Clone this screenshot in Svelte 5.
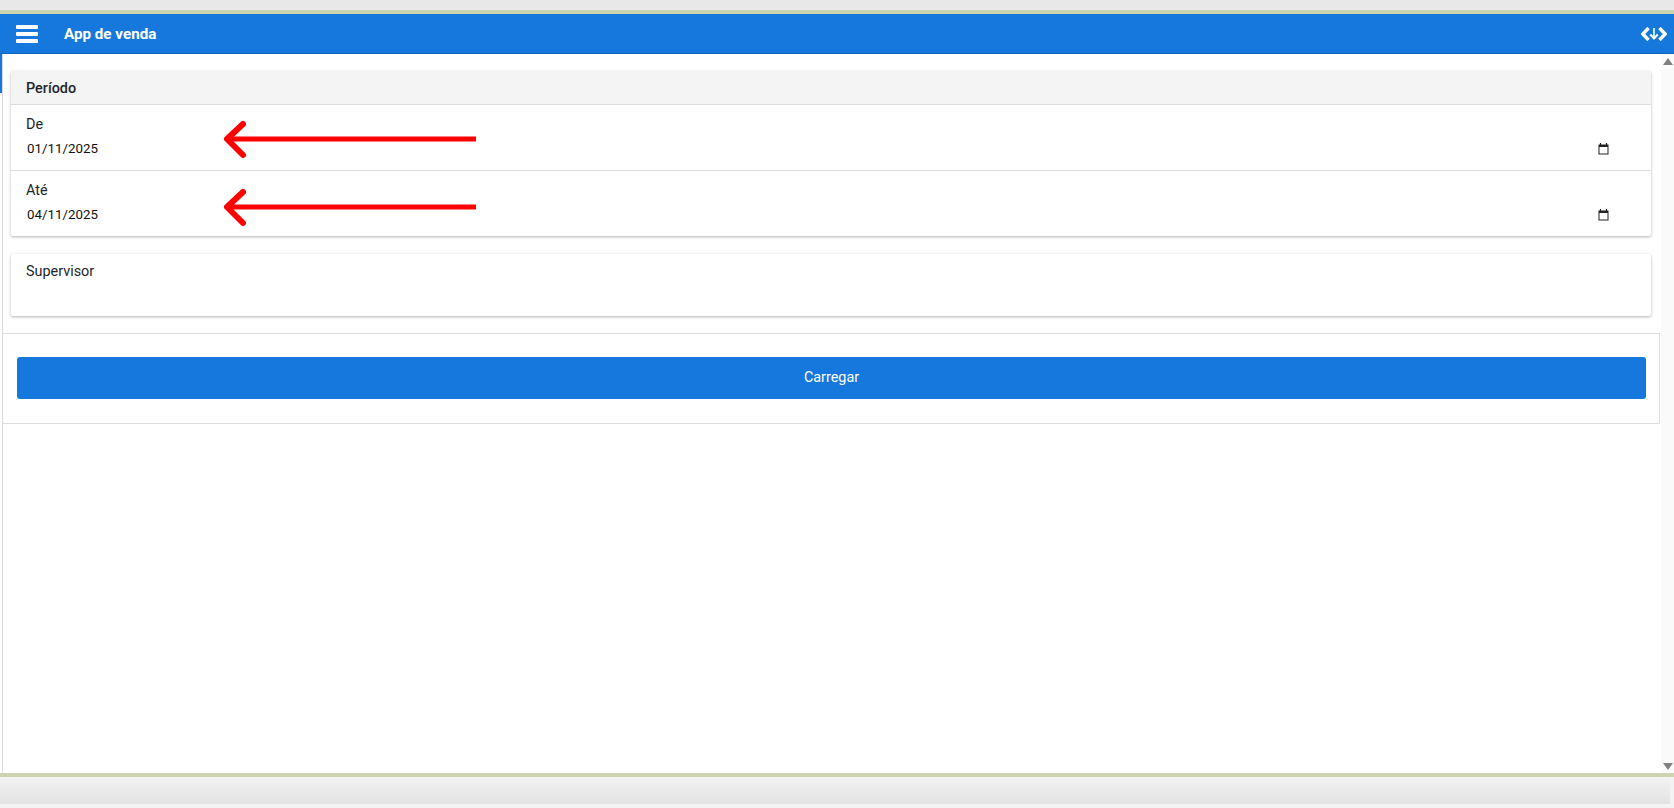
<script>
  const dates = [
    { label: "De", value: "01/11/2025" },
    { label: "Até", value: "04/11/2025" }
  ];
</script>

<style>
  :global(body) {
    font-family: Roboto, "Liberation Sans", sans-serif;
    font-size: 14.4px;
    color: #212529;
    background: #f3f3f3;
  }
  .page {
    height: 808px;
    display: flex;
    flex-direction: column;
    position: relative;
    overflow: hidden;
  }
  .topstrip {
    height: 10px;
    background: #e8e8e8;
  }
  .olive {
    height: 4px;
    background: #cdd5b0;
    flex: none;
  }
  .header {
    height: 39px;
    flex: none;
    display: flex;
    align-items: center;
    padding-left: 16px;
    background: #1678dd;
    border-bottom: 1px solid #1164b8;
    color: #fff;
    font-size: 15.2px;
    font-weight: 700;
  }
  .burger {
    width: 22px;
    height: 18px;
    display: flex;
    flex-direction: column;
    justify-content: space-between;
    margin-right: 26px;
  }
  .burger span {
    height: 4px;
    background: #fff;
    border-radius: 1px;
  }
  .logo {
    margin-left: auto;
    margin-right: 7px;
  }
  .body {
    flex: 1;
    display: flex;
    min-height: 0;
    background: #fff;
  }
  .rail {
    width: 2px;
    flex: none;
    background: #fff;
    border-right: 1px solid #dcdcdc;
  }
  .rail div {
    height: 39px;
    background: #1678dd;
  }
  .content {
    flex: 1;
    padding-top: 17px;
    min-width: 0;
  }
  .card {
    margin: 0 10px 18px 8px;
    background: #fff;
    border-radius: 2px;
    box-shadow: 0 1px 3px rgba(0, 0, 0, 0.3);
  }
  .card-title {
    height: 31px;
    line-height: 31px;
    padding: 2px 0 0 15px;
    background: #f4f4f4;
    border-bottom: 1px solid #dedede;
    font-weight: 500;
  }
  .row {
    height: 66px;
    padding: 11px 15px 0;
    box-sizing: border-box;
    border-bottom: 1px solid #dedede;
  }
  .row:last-child {
    height: 65px;
    border-bottom: 0;
  }
  .row label {
    display: block;
    line-height: 17px;
  }
  .date {
    display: flex;
    align-items: center;
    justify-content: space-between;
    margin-top: 7px;
    padding: 0 27px 0 1px;
    font-size: 13.33px;
    line-height: 17px;
    color: #111;
  }
  .date svg {
    display: block;
  }
  .plain {
    height: 62px;
    padding: 9px 15px 0;
    box-sizing: border-box;
    line-height: 17px;
  }
  .panel {
    margin: -1px 1px 0 0;
    height: 91px;
    box-sizing: border-box;
    padding: 23px 13px 0 14px;
    border: 1px solid #dedede;
    border-left: 0;
  }
  button {
    display: block;
    width: 100%;
    height: 42px;
    border: 0;
    padding: 0 0 2px;
    border-radius: 3px;
    background: #1678dd;
    color: #fff;
    font: 14.4px Roboto, "Liberation Sans", sans-serif;
  }
  .scrollbar {
    width: 13px;
    flex: none;
    background: #fafafa;
    display: flex;
    flex-direction: column;
    justify-content: space-between;
    align-items: center;
    padding: 4px 0 3px;
    box-sizing: border-box;
  }
  .tri {
    width: 0;
    height: 0;
    border-left: 5px solid transparent;
    border-right: 5px solid transparent;
  }
  .tri.up {
    border-bottom: 7px solid #808080;
  }
  .tri.down {
    border-top: 7px solid #808080;
  }
  .bottom {
    height: 27px;
    flex: none;
    margin-right: 4px;
    background: linear-gradient(#f2f2f2, #e3e3e3);
  }
  .foot {
    height: 4px;
    flex: none;
  }
  .arrows {
    position: absolute;
    left: 0;
    top: 0;
    pointer-events: none;
  }
</style>

<div class="page">
  <div class="topstrip"></div>
  <div class="olive"></div>
  <header class="header">
    <div class="burger"><span></span><span></span><span></span></div>
    <span>App de venda</span>
    <svg class="logo" width="26" height="14" viewBox="0 0 26 14" fill="none">
      <path d="M7.500 1 1.800 7l5.700 6M18.500 1l5.700 6-5.700 6" stroke="#fff" stroke-width="3.400" />
      <path d="M13 1v10" stroke="#b5efff" stroke-width="2" />
      <path d="M9.300 7.500 13 11.500l3.700-4" stroke="#fff" stroke-width="2" />
    </svg>
  </header>
  <div class="body">
    <div class="rail"><div></div></div>
    <main class="content">
      <section class="card">
        <div class="card-title">Período</div>
        {#each dates as d}
          <div class="row">
            <label>{d.label}</label>
            <div class="date">
              <span>{d.value}</span>
              <svg width="11" height="12" viewBox="0 0 11 12">
                <path d="M2.500 0v2M8.500 0v2" stroke="#222" stroke-width="1.200" />
                <rect x="1" y="2" width="9" height="9" fill="#fff" stroke="#222" />
                <rect x="1" y="2" width="9" height="2" fill="#222" />
              </svg>
            </div>
          </div>
        {/each}
      </section>
      <section class="card">
        <div class="plain">Supervisor</div>
      </section>
      <section class="panel">
        <button>Carregar</button>
      </section>
    </main>
    <div class="scrollbar">
      <div class="tri up"></div>
      <div class="tri down"></div>
    </div>
  </div>
  <div class="olive"></div>
  <div class="bottom"></div>
  <div class="foot"></div>
  <svg class="arrows" width="1674" height="808" fill="none" stroke="#ff0000" stroke-linecap="round" stroke-linejoin="round">
    <path d="M476 139H230" stroke-width="5" stroke-linecap="butt" />
    <path d="M243 124l-16 15 16 16" stroke-width="6" />
    <path d="M476 207H230" stroke-width="5" stroke-linecap="butt" />
    <path d="M243 192l-16 15 16 16" stroke-width="6" />
  </svg>
</div>
